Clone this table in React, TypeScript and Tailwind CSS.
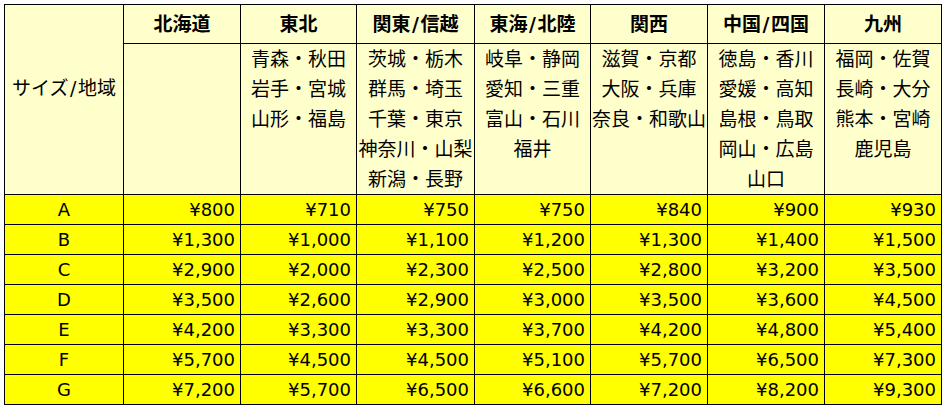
const regions = [
  { name: "北海道", prefs: [] as string[] },
  { name: "東北", prefs: ["青森・秋田", "岩手・宮城", "山形・福島"] },
  { name: "関東/信越", prefs: ["茨城・栃木", "群馬・埼玉", "千葉・東京", "神奈川・山梨", "新潟・長野"] },
  { name: "東海/北陸", prefs: ["岐阜・静岡", "愛知・三重", "富山・石川", "福井"] },
  { name: "関西", prefs: ["滋賀・京都", "大阪・兵庫", "奈良・和歌山"] },
  { name: "中国/四国", prefs: ["徳島・香川", "愛媛・高知", "島根・鳥取", "岡山・広島", "山口"] },
  { name: "九州", prefs: ["福岡・佐賀", "長崎・大分", "熊本・宮崎", "鹿児島"] },
];

const widths = [119, 117, 116, 118, 116, 117, 117, 117];

const rates: [string, string[]][] = [
  ["A", ["¥800", "¥710", "¥750", "¥750", "¥840", "¥900", "¥930"]],
  ["B", ["¥1,300", "¥1,000", "¥1,100", "¥1,200", "¥1,300", "¥1,400", "¥1,500"]],
  ["C", ["¥2,900", "¥2,000", "¥2,300", "¥2,500", "¥2,800", "¥3,200", "¥3,500"]],
  ["D", ["¥3,500", "¥2,600", "¥2,900", "¥3,000", "¥3,500", "¥3,600", "¥4,500"]],
  ["E", ["¥4,200", "¥3,300", "¥3,300", "¥3,700", "¥4,200", "¥4,800", "¥5,400"]],
  ["F", ["¥5,700", "¥4,500", "¥4,500", "¥5,100", "¥5,700", "¥6,500", "¥7,300"]],
  ["G", ["¥7,200", "¥5,700", "¥6,500", "¥6,600", "¥7,200", "¥8,200", "¥9,300"]],
];

// slash in the labels is a bit wider in the original font
function Label({ text }: { text: string }) {
  const parts = text.split("/");
  return (
    <>
      {parts.map((p, i) => (
        <span key={i}>
          {i > 0 && <span className="px-[1.5px]">/</span>}
          {p}
        </span>
      ))}
    </>
  );
}

export default function App() {
  return (
    <div
      className="bg-white w-[949px] h-[410px] pt-[4px] pl-[4px] text-black"
      style={{ fontFamily: '"DejaVu Sans", "Noto Sans CJK JP", sans-serif' }}
    >
      <table className="table-fixed border-collapse w-[938px]">
        <colgroup>
          {widths.map((w, i) => (
            <col key={i} style={{ width: w }} />
          ))}
        </colgroup>
        <thead>
          <tr className="h-[39px] bg-[#ffffcc]">
            <th
              rowSpan={2}
              className="border border-black font-normal text-[19px] align-middle text-center pb-[22px] whitespace-nowrap"
            >
              <Label text="サイズ/地域" />
            </th>
            {regions.map((r) => (
              <th
                key={r.name}
                className="border border-black font-bold text-[19px] text-center align-middle whitespace-nowrap"
              >
                <Label text={r.name} />
              </th>
            ))}
          </tr>
          <tr className="h-[151px] bg-[#ffffcc]">
            {regions.map((r) => (
              <td
                key={r.name}
                className="border border-black align-top text-center text-[19px] leading-[30px] whitespace-nowrap"
              >
                {r.prefs.map((p) => (
                  <div key={p}>{p}</div>
                ))}
              </td>
            ))}
          </tr>
        </thead>
        <tbody>
          {rates.map(([size, prices]) => (
            <tr key={size} className="h-[30px] bg-[#ffff00]">
              <td className="border border-black text-center text-[18px] leading-none">
                {size}
              </td>
              {prices.map((p, i) => (
                <td
                  key={i}
                  className="border border-black text-right text-[18px] leading-none pr-[5px]"
                >
                  {p}
                </td>
              ))}
            </tr>
          ))}
        </tbody>
      </table>
    </div>
  );
}
